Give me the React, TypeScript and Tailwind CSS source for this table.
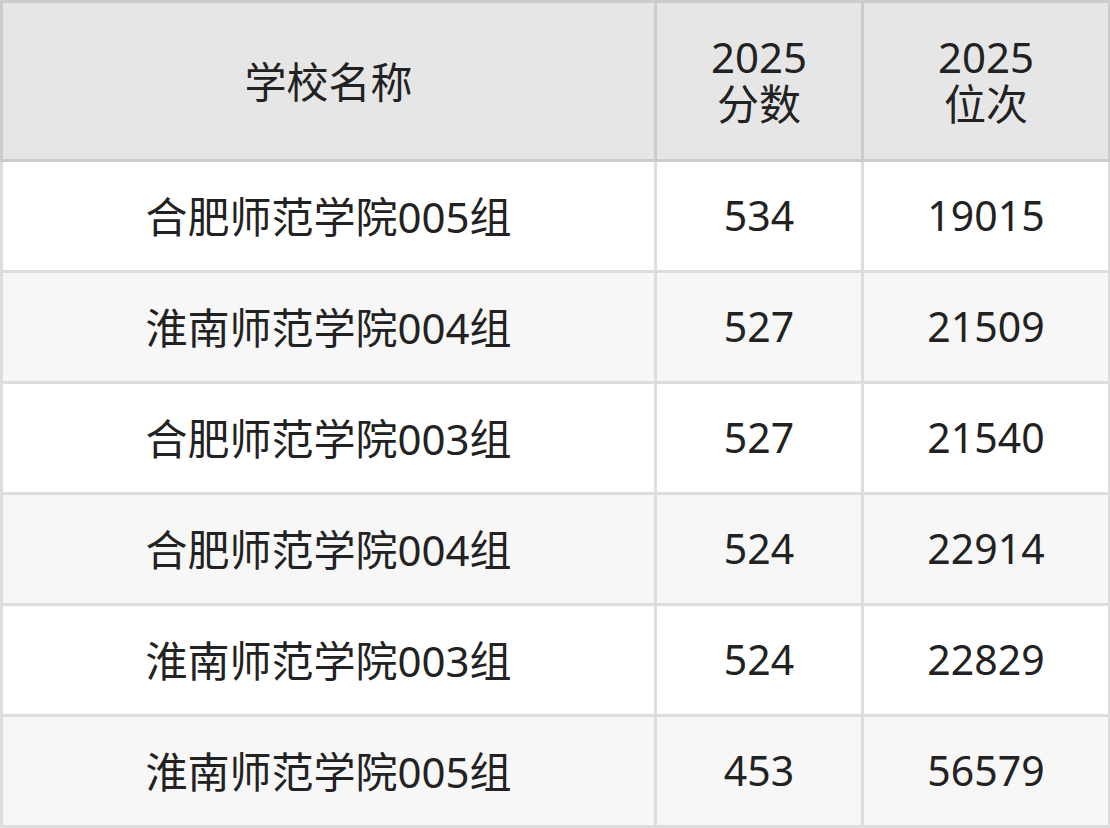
import React from "react";

const rows = [
  ["合肥师范学院005组", "534", "19015"],
  ["淮南师范学院004组", "527", "21509"],
  ["合肥师范学院003组", "527", "21540"],
  ["合肥师范学院004组", "524", "22914"],
  ["淮南师范学院003组", "524", "22829"],
  ["淮南师范学院005组", "453", "56579"],
];

export default function App() {
  return (
    <div
      className="w-[1110px] h-[828px] text-[#222222] text-[42px]"
      style={{ fontFamily: '"Noto Sans", "Noto Sans CJK SC", sans-serif' }}
    >
      <div className="grid grid-cols-[651px_204px_244px] gap-x-[3px] bg-[#cccccc] pl-[3px] pr-[2px] pt-[3px] pb-[3px]">
        <div className="h-[156px] bg-[#e6e6e6] flex items-center justify-center">学校名称</div>
        <div className="h-[156px] bg-[#e6e6e6] flex items-center justify-center text-center leading-[47px]">
          <p className="-mt-[3px]">
            2025
            <br />
            分数
          </p>
        </div>
        <div className="h-[156px] bg-[#e6e6e6] flex items-center justify-center text-center leading-[47px]">
          <p className="-mt-[3px]">
            2025
            <br />
            位次
          </p>
        </div>
      </div>
      {rows.map((r, i) => (
        <div
          key={i}
          className="grid grid-cols-[651px_204px_244px] gap-x-[3px] bg-[#dddddd] pl-[3px] pr-[2px] pb-[3px]"
        >
          {r.map((c, j) => (
            <div
              key={j}
              className={`h-[108px] flex items-center justify-center ${j > 0 ? "text-[41px]" : ""} ${i % 2 === 0 ? "bg-white" : "bg-[#f7f7f7]"}`}
            >
              {c}
            </div>
          ))}
        </div>
      ))}
    </div>
  );
}
